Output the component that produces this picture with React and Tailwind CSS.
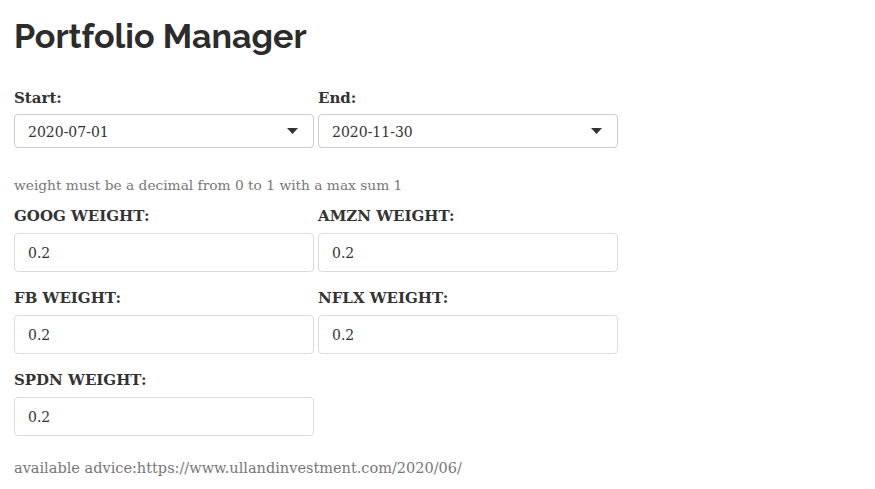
import React from 'react';

const serif = { fontFamily: 'Georgia, "DejaVu Serif", serif' };

function Caret() {
    return (
        <svg width="11" height="6" viewBox="0 0 11 6" className="text-[#333]">
            <path d="M0 0 L11 0 L5.5 6 Z" fill="currentColor" />
        </svg>
    );
}

function DateSelect({ label, value }) {
    return (
        <div className="w-[300px]">
            <div className="h-[30px] pt-[7px] text-[15px] font-bold leading-none text-[#333]">{label}</div>
            <div className="flex h-[34px] items-center justify-between rounded border border-[#ccc] pl-[13px] pr-[15px] text-[14px] text-[#333]">
                <span className="pt-[2px]">{value}</span>
                <Caret />
            </div>
        </div>
    );
}

function WeightInput({ label }) {
    return (
        <div className="w-[300px]">
            <div className="h-[40px] pt-[16px] text-[15px] font-bold leading-none text-[#333]">{label}</div>
            <div className="flex h-[39px] items-center rounded border border-[#dcdcdc] pl-[13px] pt-[3px] text-[14px] text-[#333]">
                0.2
            </div>
        </div>
    );
}

export default function App() {
    return (
        <div className="min-h-[489px] w-[875px] bg-white px-[14px] pt-[16px]" style={serif}>
            <h1 className="text-[34px] font-bold leading-[40px] text-[#2c2c2c]" style={{ fontFamily: 'Raleway, Lato, "Open Sans", sans-serif' }}>
                Portfolio Manager
            </h1>

            <div className="mt-[28px] flex gap-[4px]">
                <DateSelect label="Start:" value="2020-07-01" />
                <DateSelect label="End:" value="2020-11-30" />
            </div>

            <p className="mt-[31px] text-[13.75px] leading-none text-[#777]">weight must be a decimal from 0 to 1 with a max sum 1</p>

            <div className="flex gap-[4px]">
                <WeightInput label="GOOG WEIGHT:" />
                <WeightInput label="AMZN WEIGHT:" />
            </div>
            <div className="mt-[3px] flex gap-[4px]">
                <WeightInput label="FB WEIGHT:" />
                <WeightInput label="NFLX WEIGHT:" />
            </div>
            <div className="mt-[3px] flex gap-[4px]">
                <WeightInput label="SPDN WEIGHT:" />
            </div>

            <p className="mt-[25px] text-[14.5px] leading-none text-[#777]">available advice:https://www.ullandinvestment.com/2020/06/</p>
        </div>
    );
}
